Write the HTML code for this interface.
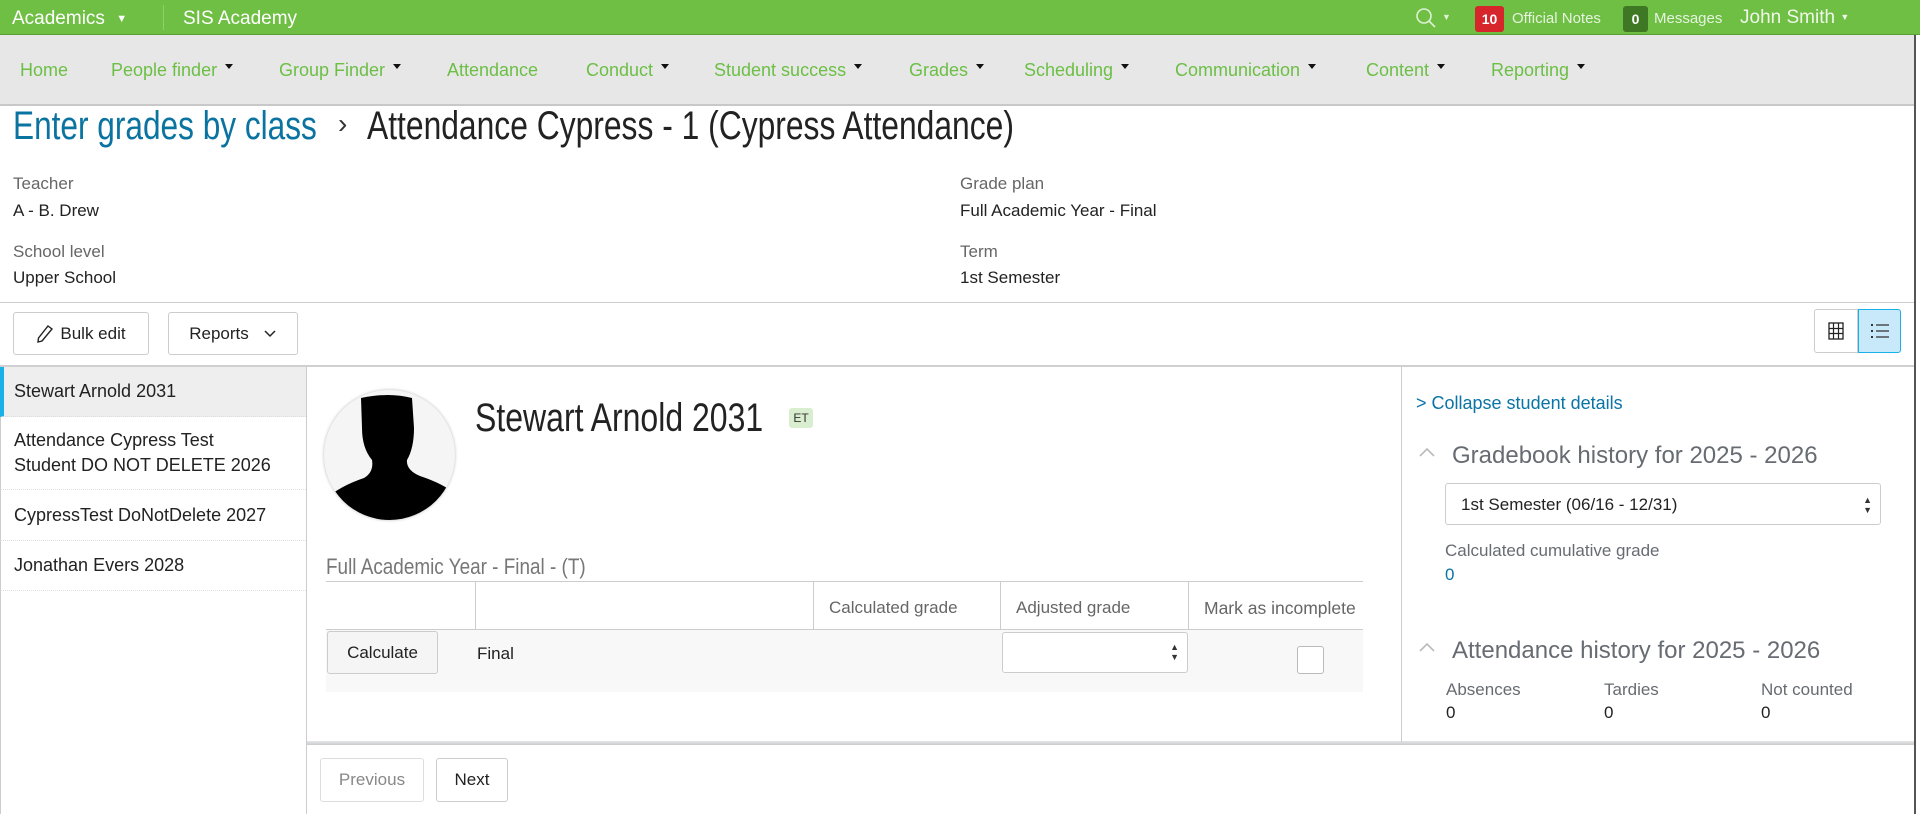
<!DOCTYPE html>
<html><head><meta charset="utf-8"><style>
*{box-sizing:border-box;margin:0;padding:0}
body{width:1920px;height:814px;overflow:hidden;background:#fff;font-family:"Liberation Sans",sans-serif;color:#222;position:relative}
.a{position:absolute;white-space:nowrap}
.top{left:0;top:0;width:1920px;height:35px;background:#6fbf44;border-bottom:1px solid #5a9c36}
.nav{left:0;top:35px;width:1914px;height:71px;background:#e7e7e7;border-bottom:2px solid #c8c8c8}
.nv{top:60px;font-size:18px;color:#6cbf45}
.car{display:inline-block;width:0;height:0;border-left:4px solid transparent;border-right:4px solid transparent;border-top:5px solid #111;vertical-align:middle;margin-left:8px;position:relative;top:-5px}
.lbl{font-size:17px;color:#666}
.val{font-size:17px;color:#222}
.btn{border:1px solid #ccc;border-radius:3px;background:#fff;font-size:17px;color:#222;display:flex;align-items:center;justify-content:center}
.li{left:0;width:306px;font-size:18px;color:#222;padding-left:14px;border-bottom:1px dotted #ddd;display:flex;align-items:center;line-height:25px}
.th{font-size:17px;color:#666;top:598px}
</style></head><body>
<div class="a top"></div>
<div class="a" style="left:12px;top:8px;font-size:19px;color:#fff">Academics <span style="font-size:11px;margin-left:6px;position:relative;top:-2px">▼</span></div>
<div class="a" style="left:163px;top:5px;width:1px;height:25px;background:#8fd06a"></div>
<div class="a" style="left:183px;top:8px;font-size:19px;color:#fff">SIS Academy</div>
<svg class="a" style="left:1415px;top:7px" width="22" height="22" viewBox="0 0 22 22"><circle cx="9" cy="9" r="7" fill="none" stroke="#dff0d4" stroke-width="1.6"/><line x1="14" y1="14" x2="20" y2="20" stroke="#dff0d4" stroke-width="1.6"/></svg>
<div class="a" style="left:1442px;top:12px;font-size:9px;color:#dff0d4">▼</div>
<div class="a" style="left:1475px;top:6px;width:29px;height:26px;background:#d7262b;border-radius:3px;color:#fff;font-size:14px;font-weight:bold;text-align:center;line-height:26px">10</div>
<div class="a" style="left:1512px;top:10px;font-size:15px;color:#e6f3de">Official Notes</div>
<div class="a" style="left:1623px;top:6px;width:25px;height:26px;background:#3e7824;border-radius:3px;color:#fff;font-size:14px;font-weight:bold;text-align:center;line-height:26px">0</div>
<div class="a" style="left:1654px;top:10px;font-size:15px;color:#e6f3de">Messages</div>
<div class="a" style="left:1740px;top:7px;font-size:19px;color:#eef7e8">John Smith <span style="font-size:9px;position:relative;top:-3px">▼</span></div>

<div class="a nav"></div>
<div class="a" style="left:1914px;top:35px;width:2px;height:779px;background:#555"></div>
<div class="a nv" style="left:20px">Home</div>
<div class="a nv" style="left:111px">People finder<span class="car"></span></div>
<div class="a nv" style="left:279px">Group Finder<span class="car"></span></div>
<div class="a nv" style="left:447px">Attendance</div>
<div class="a nv" style="left:586px">Conduct<span class="car"></span></div>
<div class="a nv" style="left:714px">Student success<span class="car"></span></div>
<div class="a nv" style="left:909px">Grades<span class="car"></span></div>
<div class="a nv" style="left:1024px">Scheduling<span class="car"></span></div>
<div class="a nv" style="left:1175px">Communication<span class="car"></span></div>
<div class="a nv" style="left:1366px">Content<span class="car"></span></div>
<div class="a nv" style="left:1491px">Reporting<span class="car"></span></div>

<div class="a" style="left:13px;top:104px;font-size:40px;color:#0a73a0;transform:scaleX(0.79);transform-origin:0 0;font-weight:300">Enter grades by class</div>
<div class="a" style="left:338px;top:108px;font-size:28px;color:#333">›</div>
<div class="a" style="left:367px;top:104px;font-size:40px;color:#222;transform:scaleX(0.795);transform-origin:0 0">Attendance Cypress - 1 (Cypress Attendance)</div>

<div class="a lbl" style="left:13px;top:174px">Teacher</div>
<div class="a val" style="left:13px;top:201px">A - B. Drew</div>
<div class="a lbl" style="left:13px;top:242px">School level</div>
<div class="a val" style="left:13px;top:268px">Upper School</div>
<div class="a lbl" style="left:960px;top:174px">Grade plan</div>
<div class="a val" style="left:960px;top:201px">Full Academic Year - Final</div>
<div class="a lbl" style="left:960px;top:242px">Term</div>
<div class="a val" style="left:960px;top:268px">1st Semester</div>
<div class="a" style="left:0;top:302px;width:1914px;height:1px;background:#ccc"></div>

<div class="a btn" style="left:13px;top:312px;width:136px;height:43px"><svg width="18" height="20" viewBox="0 0 18 20" style="margin-right:6px"><path d="M12 2 L16 5 L6 17 L2 18 L2.5 14 Z" fill="none" stroke="#222" stroke-width="1.4"/></svg>Bulk edit</div>
<div class="a btn" style="left:168px;top:312px;width:130px;height:43px">Reports<svg width="14" height="10" viewBox="0 0 14 10" style="margin-left:14px"><path d="M2 2 L7 7 L12 2" fill="none" stroke="#222" stroke-width="1.5"/></svg></div>
<div class="a" style="left:1814px;top:309px;width:44px;height:44px;border:1px solid #ccc;border-radius:3px 0 0 3px;display:flex;align-items:center;justify-content:center"><svg width="16" height="18" viewBox="0 0 16 18"><rect x="1" y="1" width="14" height="16" fill="none" stroke="#222" stroke-width="1.3"/><path d="M1 6.5H15M1 11.5H15M5.5 1V17M10.5 1V17" stroke="#222" stroke-width="1.2"/></svg></div>
<div class="a" style="left:1858px;top:309px;width:43px;height:44px;border:1px solid #1ab0e8;background:#c8e9f9;border-radius:0 3px 3px 0;display:flex;align-items:center;justify-content:center"><svg width="20" height="16" viewBox="0 0 20 16"><path d="M1 2h2M1 8h2M1 14h2" stroke="#333" stroke-width="2"/><path d="M6 2h13M6 8h13M6 14h13" stroke="#333" stroke-width="1.3"/></svg></div>
<div class="a" style="left:0;top:365px;width:1914px;height:2px;background:#d0d0d0"></div>

<div class="a" style="left:0;top:367px;width:307px;height:447px;border-right:1px solid #ccc;border-left:1px solid #ccc"></div>
<div class="a li" style="top:367px;height:50px;background:#eee;border-left:4px solid #1ab0e8;padding-left:10px">Stewart Arnold 2031</div>
<div class="a li" style="top:417px;height:73px;white-space:normal">Attendance Cypress Test<br>Student DO NOT DELETE 2026</div>
<div class="a li" style="top:490px;height:51px">CypressTest DoNotDelete 2027</div>
<div class="a li" style="top:541px;height:50px">Jonathan Evers 2028</div>

<div class="a" style="left:324px;top:390px;width:131px;height:130px;border-radius:50%;background:#f5f5f5;box-shadow:0 0 3px #bbb;overflow:hidden">
<svg width="131" height="130" viewBox="0 0 131 130"><path d="M37 8 Q65 2 88 8 L90 38 Q90 58 83 70 Q82 80 96 86 Q120 94 131 104 L131 130 L0 130 L0 110 Q16 96 40 88 Q50 82 48 70 Q38 58 38 38 Z" fill="#000"/></svg></div>
<div class="a" style="left:475px;top:396px;font-size:40px;color:#222;transform:scaleX(0.8);transform-origin:0 0">Stewart Arnold 2031</div>
<div class="a" style="left:789px;top:408px;width:24px;height:20px;background:#d9edcf;border-radius:3px;font-size:12px;text-align:center;line-height:20px;color:#333">ET</div>

<div class="a" style="left:326px;top:554px;font-size:22px;color:#777;transform:scaleX(0.86);transform-origin:0 0">Full Academic Year - Final - (T)</div>
<div class="a" style="left:326px;top:581px;width:1037px;height:1px;background:#ccc"></div>
<div class="a" style="left:326px;top:629px;width:1037px;height:1px;background:#ccc"></div>
<div class="a" style="left:475px;top:581px;width:1px;height:48px;background:#ccc"></div>
<div class="a" style="left:813px;top:581px;width:1px;height:48px;background:#ccc"></div>
<div class="a" style="left:1000px;top:581px;width:1px;height:48px;background:#ccc"></div>
<div class="a" style="left:1188px;top:581px;width:1px;height:48px;background:#ccc"></div>
<div class="a th" style="left:829px">Calculated grade</div>
<div class="a th" style="left:1016px">Adjusted grade</div>
<div class="a" style="left:1204px;top:598px;width:159px;overflow:hidden;font-size:17.5px;color:#666">Mark as incomplete</div>
<div class="a" style="left:326px;top:630px;width:1037px;height:62px;background:#f8f8f8"></div>
<div class="a btn" style="left:327px;top:631px;width:111px;height:43px;background:#f5f5f5">Calculate</div>
<div class="a val" style="left:477px;top:644px;font-size:17px">Final</div>
<div class="a" style="left:1002px;top:632px;width:186px;height:41px;border:1px solid #ccc;border-radius:3px;background:#fff"><div class="a" style="right:8px;top:9px;font-size:9px;line-height:10px;color:#333">▲<br>▼</div></div>
<div class="a" style="left:1297px;top:646px;width:27px;height:28px;border:1px solid #bbb;border-radius:3px;background:#fff"></div>

<div class="a" style="left:307px;top:741px;width:1607px;height:4px;background:linear-gradient(#e4e6e8,#c9cbcd)"></div>
<div class="a btn" style="left:320px;top:758px;width:104px;height:44px;color:#888;border-color:#ddd">Previous</div>
<div class="a btn" style="left:436px;top:758px;width:72px;height:44px">Next</div>

<div class="a" style="left:1401px;top:367px;width:1px;height:375px;background:#ccc"></div>
<div class="a" style="left:1416px;top:393px;font-size:18px;color:#0a74a6">&gt; Collapse student details</div>
<svg class="a" style="left:1418px;top:446px" width="18" height="12" viewBox="0 0 18 12"><path d="M2 10 L9 3 L16 10" fill="none" stroke="#bbb" stroke-width="1.6"/></svg>
<div class="a" style="left:1452px;top:442px;font-size:24px;color:#676b72">Gradebook history for 2025 - 2026</div>
<div class="a" style="left:1445px;top:483px;width:436px;height:42px;border:1px solid #ccc;border-radius:3px;font-size:17px;color:#222;padding:11px 0 0 15px">1st Semester (06/16 - 12/31)<div class="a" style="right:8px;top:11px;font-size:9px;line-height:10px;color:#333">▲<br>▼</div></div>
<div class="a" style="left:1445px;top:541px;font-size:17px;color:#676b72">Calculated cumulative grade</div>
<div class="a" style="left:1445px;top:565px;font-size:17px;color:#0a74a6">0</div>
<svg class="a" style="left:1418px;top:641px" width="18" height="12" viewBox="0 0 18 12"><path d="M2 10 L9 3 L16 10" fill="none" stroke="#bbb" stroke-width="1.6"/></svg>
<div class="a" style="left:1452px;top:637px;font-size:24px;color:#676b72">Attendance history for 2025 - 2026</div>
<div class="a lbl" style="left:1446px;top:680px;color:#676b72">Absences</div>
<div class="a val" style="left:1446px;top:703px">0</div>
<div class="a lbl" style="left:1604px;top:680px;color:#676b72">Tardies</div>
<div class="a val" style="left:1604px;top:703px">0</div>
<div class="a lbl" style="left:1761px;top:680px;color:#676b72">Not counted</div>
<div class="a val" style="left:1761px;top:703px">0</div>
</body></html>
